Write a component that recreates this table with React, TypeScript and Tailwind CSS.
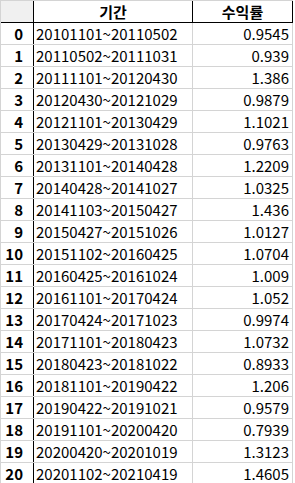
const rows: [string, string][] = [
  ["20101101~20110502", "0.9545"],
  ["20110502~20111031", "0.939"],
  ["20111101~20120430", "1.386"],
  ["20120430~20121029", "0.9879"],
  ["20121101~20130429", "1.1021"],
  ["20130429~20131028", "0.9763"],
  ["20131101~20140428", "1.2209"],
  ["20140428~20141027", "1.0325"],
  ["20141103~20150427", "1.436"],
  ["20150427~20151026", "1.0127"],
  ["20151102~20160425", "1.0704"],
  ["20160425~20161024", "1.009"],
  ["20161101~20170424", "1.052"],
  ["20170424~20171023", "0.9974"],
  ["20171101~20180423", "1.0732"],
  ["20180423~20181022", "0.8933"],
  ["20181101~20190422", "1.206"],
  ["20190422~20191021", "0.9579"],
  ["20191101~20200420", "0.7939"],
  ["20200420~20201019", "1.3123"],
  ["20201102~20210419", "1.4605"],
];

export default function App() {
  return (
    <div className="w-[295px] h-[483px] bg-white overflow-hidden font-['Noto_Sans_CJK_KR',sans-serif] text-[15px] text-black leading-none">
      <div className="w-[293px] border-l border-t border-[#d4d4d4]">
        <div className="flex h-[22px] border-b border-black">
          <div className="w-[33px] h-full bg-[#f0f0f0] border-r border-black" />
          <div className="w-[159px] h-full border-r border-black flex items-center justify-center font-bold">
            기간
          </div>
          <div className="w-[100px] h-full border-r border-black flex items-center justify-center font-bold">
            수익률
          </div>
        </div>
        {rows.map(([period, ret], i) => (
          <div key={i} className="flex h-[22px] border-b border-[#d4d4d4]">
            <div className="w-[33px] h-full border-r border-black flex items-center justify-end pr-[10px] font-bold">
              {i}
            </div>
            <div className="w-[159px] h-full border-r border-[#d4d4d4] flex items-center pl-[2px]">
              {period}
            </div>
            <div className="w-[100px] h-full border-r border-[#d4d4d4] flex items-center justify-end pr-[3px]">
              {ret}
            </div>
          </div>
        ))}
      </div>
    </div>
  );
}
